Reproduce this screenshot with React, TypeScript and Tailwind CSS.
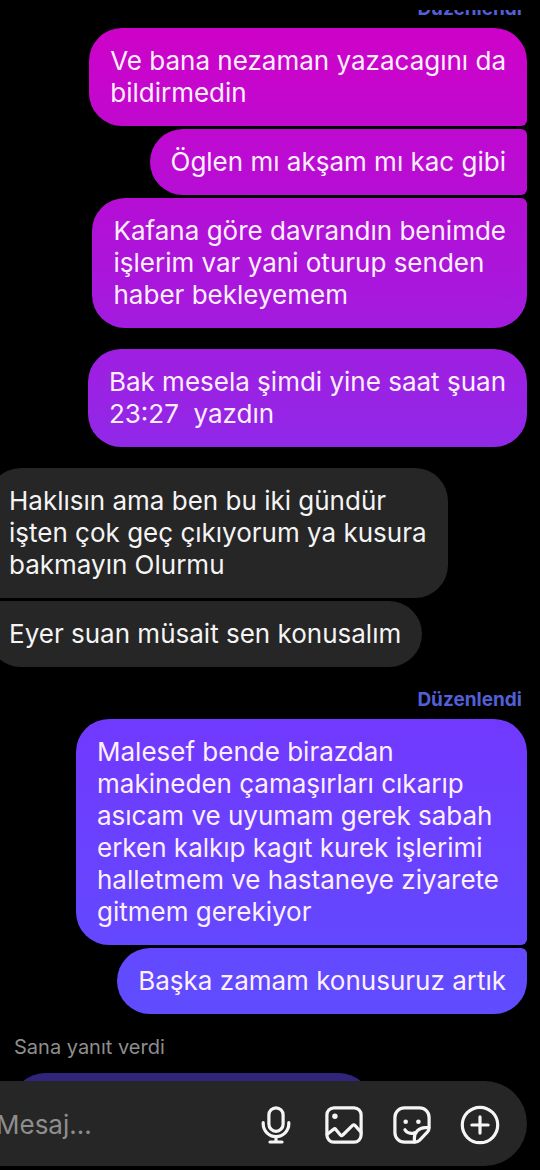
import type { ReactNode } from "react";

type Position = "single" | "first" | "middle" | "last";

const sentCorners: Record<Position, string> = {
  single: "rounded-[33px]",
  first: "rounded-[33px] rounded-br-md",
  middle: "rounded-[33px] rounded-r-md",
  last: "rounded-[33px] rounded-tr-md",
};

const receivedCorners: Record<Position, string> = {
  single: "rounded-[33px]",
  first: "rounded-[33px] rounded-bl-md",
  middle: "rounded-[33px] rounded-l-md",
  last: "rounded-[33px] rounded-tl-md",
};

const bubble = "w-fit whitespace-pre px-[21px] py-[17px] text-[26px] leading-8";

function Sent({ lines, position, wide }: { lines: string[]; position: Position; wide?: boolean }) {
  return (
    <p
      className={`${bubble} ${sentCorners[position]} ${wide ? "min-w-[451px]" : ""} bg-[linear-gradient(to_bottom,#d200c6_0%,#b40fd6_18%,#9128e8_38%,#7139fe_62%,#5f4dff_87%)] bg-fixed text-[#fdeffd]`}
    >
      {lines.join("\n")}
    </p>
  );
}

function Received({ lines, position }: { lines: string[]; position: Position }) {
  return (
    <p className={`${bubble} ${receivedCorners[position]} bg-[#262626] text-[#f4f4f4]`}>
      {lines.join("\n")}
    </p>
  );
}

function SentGroup({ edited, children }: { edited?: boolean; children: ReactNode }) {
  return (
    <section className="flex shrink-0 flex-col items-end gap-[3px] pr-[13px]">
      {edited && (
        <span className="mb-1 pr-[5px] text-[19px] leading-6 font-bold text-[#525fd6]">
          Düzenlendi
        </span>
      )}
      {children}
    </section>
  );
}

function IconButton({ label, children }: { label: string; children: ReactNode }) {
  return (
    <button type="button" aria-label={label} className="size-10 shrink-0 text-[#f5f5f5]">
      <svg
        viewBox="0 0 40 40"
        className="size-full"
        fill="none"
        stroke="currentColor"
        strokeWidth="3.2"
        strokeLinecap="round"
        strokeLinejoin="round"
      >
        {children}
      </svg>
    </button>
  );
}

function Composer() {
  return (
    <form className="relative z-10 -mt-[58px] mr-[13px] mb-1 flex h-[85px] shrink-0 items-center gap-7 rounded-r-full bg-[#262626] pt-[3px] pr-[27px]">
      <input
        aria-label="Mesaj"
        placeholder="Mesaj..."
        className="-ml-1 min-w-0 flex-1 bg-transparent text-[26px] leading-8 text-white outline-none placeholder:text-[#8e8e8e]"
      />
      <IconButton label="Ses kaydet">
        <rect x="12.9" y="2.9" width="14.2" height="23.4" rx="7.1" />
        <path d="M7.2 17.6v1.2a12.8 12.8 0 0 0 25.6 0v-1.2M20 31.8V37M14 37h12" />
      </IconButton>
      <IconButton label="Fotoğraf ekle">
        <rect x="2.9" y="2.9" width="34.2" height="34.2" rx="7" />
        <circle cx="10.9" cy="11.2" r="2.7" fill="currentColor" stroke="none" />
        <path d="M3.2 29.3 9.6 24.2q1.2-.9 2.2.2l4.6 5.6q1.2 1.3 2.4 0L28.6 20.4q1.4-1.3 2.6.2l5.8 6.6" />
      </IconButton>
      <IconButton label="Çıkartma ekle">
        <path d="M23.2 37.1H12.4a9.5 9.5 0 0 1-9.5-9.5V12.4a9.5 9.5 0 0 1 9.5-9.5h15.2a9.5 9.5 0 0 1 9.5 9.5v10.4c0 1.7-.6 3.2-1.8 4.4l-7.6 8c-1.2 1.2-2.8 1.9-4.5 1.9Z" />
        <path d="M22.4 36.8v-3.6a10.6 10.6 0 0 1 10.6-10.6h3.8" />
        <path d="M12.9 24.8c1.3 2.2 3.6 3.6 6.2 3.6 1.3 0 2.5-.2 3.6-.7" />
        <circle cx="13.7" cy="16.7" r="2.3" fill="currentColor" stroke="none" />
        <circle cx="26.4" cy="16.7" r="2.3" fill="currentColor" stroke="none" />
      </IconButton>
      <IconButton label="Daha fazla">
        <circle cx="20" cy="20" r="17.7" />
        <path d="M20 11.9v16.2M11.9 20h16.2" />
      </IconButton>
    </form>
  );
}

export default function App() {
  return (
    <div className="flex h-dvh flex-col overflow-hidden bg-black pt-2.5 font-['Inter',sans-serif]">
      <main className="flex min-h-0 flex-1 flex-col justify-end gap-[21px] overflow-hidden">
        <SentGroup edited>
          <Sent position="first" lines={["Ve bana nezaman yazacagını da", "bildirmedin"]} />
          <Sent position="middle" lines={["Öglen mı akşam mı kac gibi"]} />
          <Sent
            position="last"
            lines={["Kafana göre davrandın benimde", "işlerim var yani oturup senden", "haber bekleyemem"]}
          />
        </SentGroup>

        <SentGroup>
          <Sent position="single" lines={["Bak mesela şimdi yine saat şuan", "23:27  yazdın"]} />
        </SentGroup>

        <section className="-ml-3 flex shrink-0 flex-col items-start gap-[3px]">
          <Received
            position="first"
            lines={["Haklısın ama ben bu iki gündür", "işten çok geç çıkıyorum ya kusura", "bakmayın Olurmu"]}
          />
          <Received position="last" lines={["Eyer suan müsait sen konusalım"]} />
        </section>

        <SentGroup edited>
          <Sent
            position="first"
            wide
            lines={[
              "Malesef bende birazdan",
              "makineden çamaşırları cıkarıp",
              "asıcam ve uyumam gerek sabah",
              "erken kalkıp kagıt kurek işlerimi",
              "halletmem ve hastaneye ziyarete",
              "gitmem gerekiyor",
            ]}
          />
          <Sent position="last" lines={["Başka zamam konusuruz artık"]} />
        </SentGroup>

        <section className="shrink-0">
          <h2 className="mb-[14px] pl-[14px] text-[20px] leading-6 text-[#8e8e8e]">Sana yanıt verdi</h2>
          <div className="ml-3 h-[66px] w-2/3 rounded-[33px] bg-[#30257b]" />
        </section>
      </main>
      <Composer />
    </div>
  );
}
